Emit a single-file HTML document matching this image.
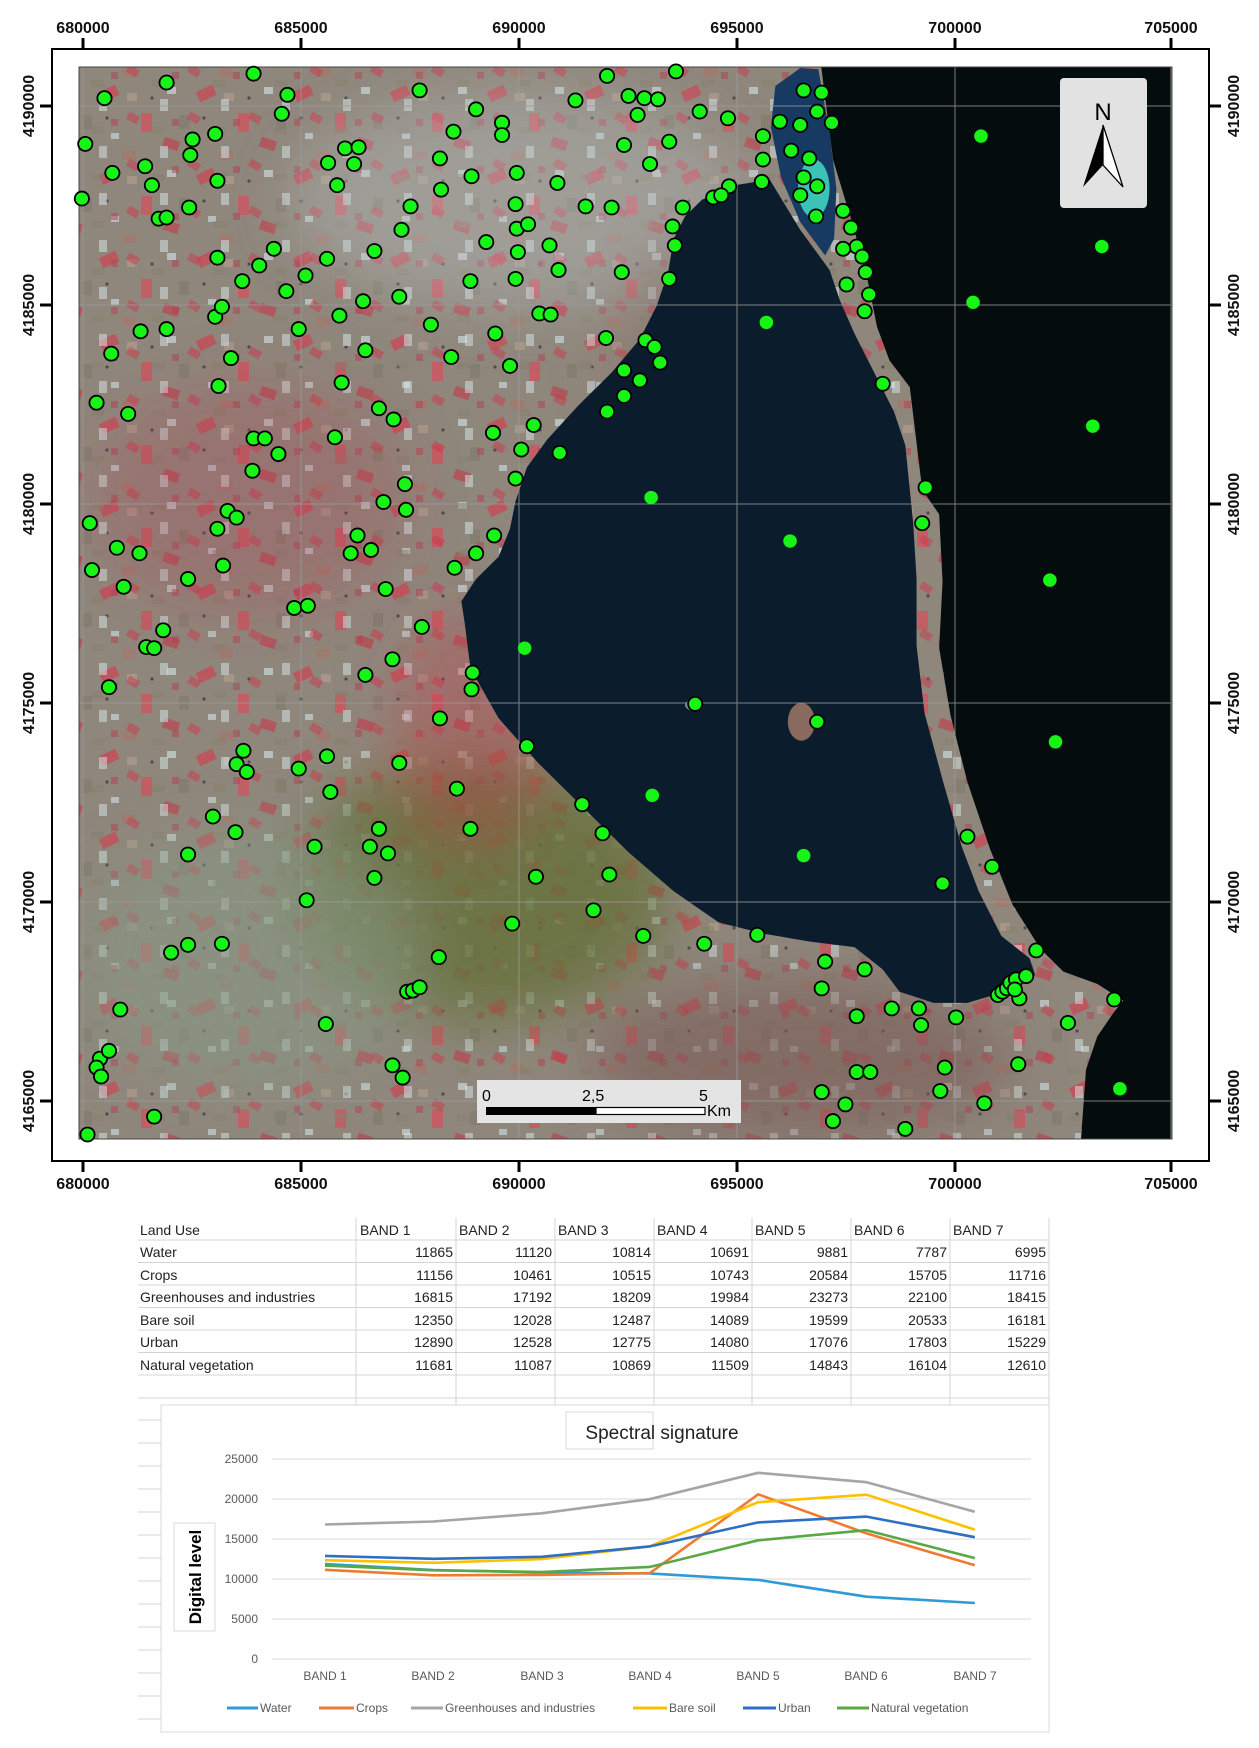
<!DOCTYPE html>
<html><head><meta charset="utf-8"><style>
html,body{margin:0;padding:0;background:#fff;}
body{width:1259px;height:1748px;position:relative;overflow:hidden;font-family:"Liberation Sans",sans-serif;}
svg{position:absolute;left:0;top:0;}
</style></head><body>
<svg width="1259" height="1748" viewBox="0 0 1259 1748">
<defs>
<clipPath id="img"><rect x="79" y="67" width="1093" height="1072"/></clipPath>
<pattern id="f1" patternUnits="userSpaceOnUse" width="97" height="83">
<rect x="3" y="5" width="18" height="11" fill="#d9384c" transform="rotate(-25 12 10)"/>
<rect x="44" y="30" width="11" height="19" fill="#e24456"/>
<rect x="70" y="4" width="9" height="7" fill="#d4e6e8"/>
<rect x="14" y="50" width="8" height="6" fill="#cfe3e6"/>
<rect x="66" y="56" width="16" height="10" fill="#c43848" transform="rotate(18 74 61)"/>
<rect x="30" y="10" width="10" height="8" fill="#b3a08e"/>
<rect x="82" y="32" width="10" height="14" fill="#7e7a6a"/>
<rect x="25" y="68" width="14" height="9" fill="#a87468"/>
<circle cx="55" cy="15" r="1.6" fill="#223"/><circle cx="10" cy="35" r="1.6" fill="#223"/>
</pattern>
<pattern id="f2" patternUnits="userSpaceOnUse" width="61" height="47">
<rect x="5" y="20" width="12" height="8" fill="#cc3a4c" transform="rotate(30 11 24)"/>
<rect x="38" y="5" width="8" height="12" fill="#d8e8ea"/>
<rect x="30" y="33" width="13" height="7" fill="#867f6c"/>
<rect x="50" y="25" width="7" height="7" fill="#b04050"/>
</pattern>
<filter id="bl" x="-30%" y="-30%" width="160%" height="160%"><feGaussianBlur stdDeviation="28"/></filter>
</defs>
<g clip-path="url(#img)">
<rect x="79" y="67" width="1093" height="1072" fill="#8f877c"/>
<rect x="79" y="67" width="1093" height="1072" fill="url(#f1)" opacity="0.6"/>
<rect x="79" y="67" width="1093" height="1072" fill="url(#f2)" opacity="0.5"/>
<g filter="url(#bl)">
<ellipse cx="520" cy="200" rx="230" ry="110" fill="#bcc6c8" opacity="0.35"/>
<ellipse cx="480" cy="890" rx="190" ry="130" fill="#64703a" opacity="0.8"/>
<ellipse cx="250" cy="960" rx="170" ry="130" fill="#879884" opacity="0.6"/>
<ellipse cx="800" cy="1060" rx="210" ry="80" fill="#7c5a56" opacity="0.6"/>
<ellipse cx="470" cy="730" rx="80" ry="120" fill="#c23a4a" opacity="0.35"/>
<ellipse cx="250" cy="500" rx="160" ry="120" fill="#b04050" opacity="0.25"/>
<ellipse cx="700" cy="350" rx="90" ry="120" fill="#8a6e66" opacity="0.4"/>
</g>
<g transform="matrix(1.1295 0 0 1.1155 -3.97 -1.09)">
<polygon fill="#040c0e" points="728,40 1060,40 1060,1030 960,1030 965,960 975,930 990,908 998,898 975,883 945,872 925,852 900,812 880,762 860,702 845,642 835,582 838,522 835,462 820,440 809,348 791,324 780,294 771,249 759,204 741,144"/>
<polygon fill="#0b1d2d" points="415,560 412,540 425,520 445,500 455,475 460,450 470,420 488,395 515,365 545,335 570,305 585,275 595,245 600,215 610,195 625,180 654,167 685,162 712,207 738,243 747,270 760,300 775,330 795,370 805,400 808,430 812,470 815,520 815,580 822,640 838,700 855,760 870,800 890,840 915,860 920,875 900,888 860,900 830,900 800,890 785,870 760,850 720,845 680,838 640,828 600,800 560,765 520,725 480,685 445,645 420,600"/>
<polygon fill="#173a63" points="690,78 712,62 728,63 738,120 744,170 742,215 734,230 712,200 695,160 686,115"/>
<ellipse cx="724" cy="170" rx="14" ry="26" fill="#3fd3bf" opacity="0.9"/>
<ellipse cx="713" cy="648" rx="12" ry="17" fill="#8a6a5e"/>
<ellipse cx="618" cy="633" rx="8" ry="5" fill="#8a8a86"/>
</g>
</g>
<g stroke="#9a9a9a" stroke-width="1" opacity="0.8">
<line x1="83" y1="67" x2="83" y2="1139"/><line x1="301" y1="67" x2="301" y2="1139"/><line x1="519" y1="67" x2="519" y2="1139"/><line x1="737" y1="67" x2="737" y2="1139"/><line x1="955" y1="67" x2="955" y2="1139"/><line x1="1171" y1="67" x2="1171" y2="1139"/>
<line x1="79" y1="106" x2="1172" y2="106"/><line x1="79" y1="305" x2="1172" y2="305"/><line x1="79" y1="504" x2="1172" y2="504"/><line x1="79" y1="703" x2="1172" y2="703"/><line x1="79" y1="902" x2="1172" y2="902"/><line x1="79" y1="1101" x2="1172" y2="1101"/>
</g>
<rect x="79" y="67" width="1093" height="1072" fill="none" stroke="#444" stroke-width="1"/>
<rect x="52" y="49" width="1157" height="1112" fill="none" stroke="#000" stroke-width="2"/>
<g stroke="#000" stroke-width="3">
<line x1="83" y1="38" x2="83" y2="49"/><line x1="301" y1="38" x2="301" y2="49"/><line x1="519" y1="38" x2="519" y2="49"/><line x1="737" y1="38" x2="737" y2="49"/><line x1="955" y1="38" x2="955" y2="49"/><line x1="1171" y1="38" x2="1171" y2="49"/>
<line x1="83" y1="1161" x2="83" y2="1172"/><line x1="301" y1="1161" x2="301" y2="1172"/><line x1="519" y1="1161" x2="519" y2="1172"/><line x1="737" y1="1161" x2="737" y2="1172"/><line x1="955" y1="1161" x2="955" y2="1172"/><line x1="1171" y1="1161" x2="1171" y2="1172"/>
<line x1="40" y1="106" x2="52" y2="106"/><line x1="40" y1="305" x2="52" y2="305"/><line x1="40" y1="504" x2="52" y2="504"/><line x1="40" y1="703" x2="52" y2="703"/><line x1="40" y1="902" x2="52" y2="902"/><line x1="40" y1="1101" x2="52" y2="1101"/>
<line x1="1209" y1="106" x2="1221" y2="106"/><line x1="1209" y1="305" x2="1221" y2="305"/><line x1="1209" y1="504" x2="1221" y2="504"/><line x1="1209" y1="703" x2="1221" y2="703"/><line x1="1209" y1="902" x2="1221" y2="902"/><line x1="1209" y1="1101" x2="1221" y2="1101"/>
</g>
<g font-family="Liberation Sans" font-weight="bold" font-size="16" text-anchor="middle" fill="#111">
<text x="83" y="33">680000</text><text x="301" y="33">685000</text><text x="519" y="33">690000</text><text x="737" y="33">695000</text><text x="955" y="33">700000</text><text x="1171" y="33">705000</text>
<text x="83" y="1189">680000</text><text x="301" y="1189">685000</text><text x="519" y="1189">690000</text><text x="737" y="1189">695000</text><text x="955" y="1189">700000</text><text x="1171" y="1189">705000</text>
<g transform="translate(34 0)"><text transform="translate(0 106) rotate(-90)">4190000</text><text transform="translate(0 305) rotate(-90)">4185000</text><text transform="translate(0 504) rotate(-90)">4180000</text><text transform="translate(0 703) rotate(-90)">4175000</text><text transform="translate(0 902) rotate(-90)">4170000</text><text transform="translate(0 1101) rotate(-90)">4165000</text></g>
<g transform="translate(1239 0)"><text transform="translate(0 106) rotate(-90)">4190000</text><text transform="translate(0 305) rotate(-90)">4185000</text><text transform="translate(0 504) rotate(-90)">4180000</text><text transform="translate(0 703) rotate(-90)">4175000</text><text transform="translate(0 902) rotate(-90)">4170000</text><text transform="translate(0 1101) rotate(-90)">4165000</text></g>
</g>
<g transform="matrix(1.1295 0 0 1.1155 -3.97 -1.09)" fill="#17f517" stroke="#000" stroke-width="1.6">
<circle cx="151" cy="75" r="6.3"/><circle cx="228" cy="67" r="6.3"/><circle cx="96" cy="89" r="6.3"/><circle cx="258" cy="86" r="6.3"/><circle cx="375" cy="82" r="6.3"/><circle cx="541" cy="69" r="6.3"/><circle cx="602" cy="65" r="6.3"/><circle cx="253" cy="103" r="6.3"/><circle cx="425" cy="99" r="6.3"/><circle cx="513" cy="91" r="6.3"/><circle cx="560" cy="87" r="6.3"/><circle cx="574" cy="89" r="6.3"/><circle cx="586" cy="90" r="6.3"/><circle cx="568" cy="104" r="6.3"/><circle cx="623" cy="101" r="6.3"/><circle cx="648" cy="107" r="6.3"/><circle cx="715" cy="82" r="6.3"/><circle cx="731" cy="84" r="6.3"/><circle cx="727" cy="101" r="6.3"/><circle cx="712" cy="113" r="6.3"/><circle cx="694" cy="110" r="6.3"/><circle cx="740" cy="111" r="6.3"/><circle cx="79" cy="130" r="6.3"/><circle cx="194" cy="121" r="6.3"/><circle cx="174" cy="126" r="6.3"/><circle cx="172" cy="140" r="6.3"/><circle cx="405" cy="119" r="6.3"/><circle cx="448" cy="111" r="6.3"/><circle cx="448" cy="122" r="6.3"/><circle cx="309" cy="134" r="6.3"/><circle cx="321" cy="133" r="6.3"/><circle cx="317" cy="148" r="6.3"/><circle cx="294" cy="147" r="6.3"/><circle cx="132" cy="150" r="6.3"/><circle cx="103" cy="156" r="6.3"/><circle cx="138" cy="167" r="6.3"/><circle cx="196" cy="163" r="6.3"/><circle cx="302" cy="167" r="6.3"/><circle cx="393" cy="143" r="6.3"/><circle cx="421" cy="159" r="6.3"/><circle cx="461" cy="156" r="6.3"/><circle cx="556" cy="131" r="6.3"/><circle cx="579" cy="148" r="6.3"/><circle cx="596" cy="128" r="6.3"/><circle cx="679" cy="123" r="6.3"/><circle cx="679" cy="144" r="6.3"/><circle cx="704" cy="136" r="6.3"/><circle cx="720" cy="143" r="6.3"/><circle cx="715" cy="160" r="6.3"/><circle cx="712" cy="176" r="6.3"/><circle cx="727" cy="168" r="6.3"/><circle cx="678" cy="164" r="6.3"/><circle cx="635" cy="178" r="6.3"/><circle cx="649" cy="168" r="6.3"/><circle cx="76" cy="179" r="6.3"/><circle cx="144" cy="197" r="6.3"/><circle cx="151" cy="196" r="6.3"/><circle cx="171" cy="187" r="6.3"/><circle cx="367" cy="186" r="6.3"/><circle cx="394" cy="171" r="6.3"/><circle cx="460" cy="184" r="6.3"/><circle cx="497" cy="165" r="6.3"/><circle cx="522" cy="186" r="6.3"/><circle cx="545" cy="187" r="6.3"/><circle cx="608" cy="187" r="6.3"/><circle cx="642" cy="176" r="6.3"/><circle cx="750" cy="190" r="6.3"/><circle cx="726" cy="195" r="6.3"/><circle cx="757" cy="205" r="6.3"/><circle cx="762" cy="222" r="6.3"/><circle cx="750" cy="224" r="6.3"/><circle cx="767" cy="231" r="6.3"/><circle cx="770" cy="245" r="6.3"/><circle cx="753" cy="256" r="6.3"/><circle cx="773" cy="265" r="6.3"/><circle cx="769" cy="280" r="6.3"/><circle cx="785" cy="345" r="6.3"/><circle cx="196" cy="232" r="6.3"/><circle cx="233" cy="239" r="6.3"/><circle cx="246" cy="224" r="6.3"/><circle cx="293" cy="233" r="6.3"/><circle cx="335" cy="226" r="6.3"/><circle cx="359" cy="207" r="6.3"/><circle cx="434" cy="218" r="6.3"/><circle cx="461" cy="206" r="6.3"/><circle cx="471" cy="202" r="6.3"/><circle cx="490" cy="221" r="6.3"/><circle cx="498" cy="243" r="6.3"/><circle cx="554" cy="245" r="6.3"/><circle cx="599" cy="204" r="6.3"/><circle cx="601" cy="221" r="6.3"/><circle cx="462" cy="227" r="6.3"/><circle cx="218" cy="253" r="6.3"/><circle cx="274" cy="248" r="6.3"/><circle cx="257" cy="262" r="6.3"/><circle cx="420" cy="253" r="6.3"/><circle cx="357" cy="267" r="6.3"/><circle cx="304" cy="284" r="6.3"/><circle cx="325" cy="271" r="6.3"/><circle cx="460" cy="251" r="6.3"/><circle cx="481" cy="282" r="6.3"/><circle cx="491" cy="283" r="6.3"/><circle cx="128" cy="298" r="6.3"/><circle cx="151" cy="296" r="6.3"/><circle cx="194" cy="285" r="6.3"/><circle cx="200" cy="276" r="6.3"/><circle cx="268" cy="296" r="6.3"/><circle cx="385" cy="292" r="6.3"/><circle cx="442" cy="300" r="6.3"/><circle cx="540" cy="304" r="6.3"/><circle cx="575" cy="306" r="6.3"/><circle cx="583" cy="312" r="6.3"/><circle cx="588" cy="326" r="6.3"/><circle cx="556" cy="333" r="6.3"/><circle cx="596" cy="251" r="6.3"/><circle cx="102" cy="318" r="6.3"/><circle cx="208" cy="322" r="6.3"/><circle cx="327" cy="315" r="6.3"/><circle cx="403" cy="321" r="6.3"/><circle cx="455" cy="329" r="6.3"/><circle cx="556" cy="356" r="6.3"/><circle cx="570" cy="342" r="6.3"/><circle cx="197" cy="347" r="6.3"/><circle cx="306" cy="344" r="6.3"/><circle cx="89" cy="362" r="6.3"/><circle cx="117" cy="372" r="6.3"/><circle cx="339" cy="367" r="6.3"/><circle cx="352" cy="377" r="6.3"/><circle cx="476" cy="382" r="6.3"/><circle cx="499" cy="407" r="6.3"/><circle cx="541" cy="370" r="6.3"/><circle cx="300" cy="393" r="6.3"/><circle cx="228" cy="394" r="6.3"/><circle cx="238" cy="394" r="6.3"/><circle cx="250" cy="408" r="6.3"/><circle cx="440" cy="389" r="6.3"/><circle cx="465" cy="404" r="6.3"/><circle cx="227" cy="423" r="6.3"/><circle cx="460" cy="430" r="6.3"/><circle cx="362" cy="435" r="6.3"/><circle cx="823" cy="438" r="6.3"/><circle cx="820" cy="470" r="6.3"/><circle cx="83" cy="470" r="6.3"/><circle cx="205" cy="459" r="6.3"/><circle cx="213" cy="465" r="6.3"/><circle cx="196" cy="475" r="6.3"/><circle cx="343" cy="451" r="6.3"/><circle cx="363" cy="458" r="6.3"/><circle cx="320" cy="481" r="6.3"/><circle cx="441" cy="481" r="6.3"/><circle cx="332" cy="494" r="6.3"/><circle cx="314" cy="497" r="6.3"/><circle cx="425" cy="497" r="6.3"/><circle cx="107" cy="492" r="6.3"/><circle cx="127" cy="497" r="6.3"/><circle cx="85" cy="512" r="6.3"/><circle cx="113" cy="527" r="6.3"/><circle cx="201" cy="508" r="6.3"/><circle cx="170" cy="520" r="6.3"/><circle cx="345" cy="529" r="6.3"/><circle cx="406" cy="510" r="6.3"/><circle cx="264" cy="546" r="6.3"/><circle cx="276" cy="544" r="6.3"/><circle cx="148" cy="566" r="6.3"/><circle cx="133" cy="581" r="6.3"/><circle cx="140" cy="582" r="6.3"/><circle cx="100" cy="617" r="6.3"/><circle cx="377" cy="563" r="6.3"/><circle cx="351" cy="592" r="6.3"/><circle cx="327" cy="606" r="6.3"/><circle cx="422" cy="604" r="6.3"/><circle cx="421" cy="619" r="6.3"/><circle cx="393" cy="645" r="6.3"/><circle cx="619" cy="632" r="6.3"/><circle cx="727" cy="648" r="6.3"/><circle cx="219" cy="674" r="6.3"/><circle cx="213" cy="686" r="6.3"/><circle cx="222" cy="693" r="6.3"/><circle cx="268" cy="690" r="6.3"/><circle cx="293" cy="679" r="6.3"/><circle cx="357" cy="685" r="6.3"/><circle cx="470" cy="670" r="6.3"/><circle cx="296" cy="711" r="6.3"/><circle cx="408" cy="708" r="6.3"/><circle cx="192" cy="733" r="6.3"/><circle cx="212" cy="747" r="6.3"/><circle cx="339" cy="744" r="6.3"/><circle cx="282" cy="760" r="6.3"/><circle cx="331" cy="760" r="6.3"/><circle cx="347" cy="766" r="6.3"/><circle cx="420" cy="744" r="6.3"/><circle cx="519" cy="722" r="6.3"/><circle cx="537" cy="748" r="6.3"/><circle cx="170" cy="767" r="6.3"/><circle cx="275" cy="808" r="6.3"/><circle cx="335" cy="788" r="6.3"/><circle cx="543" cy="785" r="6.3"/><circle cx="478" cy="787" r="6.3"/><circle cx="860" cy="751" r="6.3"/><circle cx="882" cy="778" r="6.3"/><circle cx="838" cy="793" r="6.3"/><circle cx="457" cy="829" r="6.3"/><circle cx="529" cy="817" r="6.3"/><circle cx="573" cy="840" r="6.3"/><circle cx="627" cy="847" r="6.3"/><circle cx="674" cy="839" r="6.3"/><circle cx="155" cy="855" r="6.3"/><circle cx="170" cy="848" r="6.3"/><circle cx="200" cy="847" r="6.3"/><circle cx="392" cy="859" r="6.3"/><circle cx="364" cy="890" r="6.3"/><circle cx="369" cy="889" r="6.3"/><circle cx="375" cy="886" r="6.3"/><circle cx="734" cy="863" r="6.3"/><circle cx="769" cy="870" r="6.3"/><circle cx="921" cy="853" r="6.3"/><circle cx="110" cy="906" r="6.3"/><circle cx="292" cy="919" r="6.3"/><circle cx="351" cy="956" r="6.3"/><circle cx="360" cy="967" r="6.3"/><circle cx="92" cy="950" r="6.3"/><circle cx="89" cy="958" r="6.3"/><circle cx="100" cy="943" r="6.3"/><circle cx="93" cy="966" r="6.3"/><circle cx="140" cy="1002" r="6.3"/><circle cx="81" cy="1018" r="6.3"/><circle cx="731" cy="980" r="6.3"/><circle cx="752" cy="991" r="6.3"/><circle cx="741" cy="1006" r="6.3"/><circle cx="805" cy="1013" r="6.3"/><circle cx="836" cy="979" r="6.3"/><circle cx="840" cy="958" r="6.3"/><circle cx="762" cy="962" r="6.3"/><circle cx="774" cy="962" r="6.3"/><circle cx="731" cy="887" r="6.3"/><circle cx="762" cy="912" r="6.3"/><circle cx="793" cy="905" r="6.3"/><circle cx="817" cy="905" r="6.3"/><circle cx="819" cy="920" r="6.3"/><circle cx="850" cy="913" r="6.3"/><circle cx="887" cy="893" r="6.3"/><circle cx="891" cy="890" r="6.3"/><circle cx="895" cy="887" r="6.3"/><circle cx="898" cy="882" r="6.3"/><circle cx="903" cy="879" r="6.3"/><circle cx="912" cy="876" r="6.3"/><circle cx="906" cy="896" r="6.3"/><circle cx="902" cy="888" r="6.3"/><circle cx="949" cy="918" r="6.3"/><circle cx="905" cy="955" r="6.3"/><circle cx="875" cy="990" r="6.3"/><circle cx="990" cy="897" r="6.3"/>
<g stroke="none"><circle cx="872" cy="123" r="6"/><circle cx="979" cy="222" r="6"/><circle cx="865" cy="272" r="6"/><circle cx="971" cy="383" r="6"/><circle cx="682" cy="290" r="6"/><circle cx="580" cy="447" r="6"/><circle cx="703" cy="486" r="6"/><circle cx="933" cy="521" r="6"/><circle cx="938" cy="666" r="6"/><circle cx="995" cy="977" r="6"/><circle cx="468" cy="582" r="6"/><circle cx="581" cy="714" r="6"/><circle cx="715" cy="768" r="6"/></g>
</g>
<rect x="1060" y="78" width="87" height="130" rx="4" fill="#e2e2e2"/>
<text x="1103" y="120" font-family="Liberation Sans" font-size="24" text-anchor="middle" fill="#000">N</text>
<polygon points="1103,125 1083,187 1103,165" fill="#000"/>
<polygon points="1103,125 1123,187 1103,165" fill="#fff" stroke="#000" stroke-width="1.3"/>
<rect x="477" y="1080" width="264" height="43" fill="#e4e4e4"/>
<g font-family="Liberation Sans" font-size="16" fill="#000"><text x="482" y="1101">0</text><text x="582" y="1101">2,5</text><text x="699" y="1101">5</text><text x="707" y="1116">Km</text></g>
<rect x="486" y="1107" width="110" height="8" fill="#000"/>
<rect x="596" y="1107.5" width="109" height="7" fill="#fff" stroke="#000" stroke-width="1.2"/>

<g stroke="#d4d4d4" stroke-width="1">
<line x1="138" y1="1240" x2="1049" y2="1240"/><line x1="138" y1="1262.5" x2="1049" y2="1262.5"/><line x1="138" y1="1285" x2="1049" y2="1285"/><line x1="138" y1="1307.5" x2="1049" y2="1307.5"/><line x1="138" y1="1330" x2="1049" y2="1330"/><line x1="138" y1="1352.5" x2="1049" y2="1352.5"/><line x1="138" y1="1375" x2="1049" y2="1375"/><line x1="138" y1="1398" x2="1049" y2="1398"/>
<line x1="356" y1="1218" x2="356" y2="1405"/><line x1="456" y1="1218" x2="456" y2="1405"/><line x1="555" y1="1218" x2="555" y2="1405"/><line x1="654" y1="1218" x2="654" y2="1405"/><line x1="752" y1="1218" x2="752" y2="1405"/><line x1="851" y1="1218" x2="851" y2="1405"/><line x1="950" y1="1218" x2="950" y2="1405"/><line x1="1049" y1="1218" x2="1049" y2="1405"/>
<line x1="138" y1="1420" x2="161" y2="1420"/><line x1="138" y1="1443" x2="161" y2="1443"/><line x1="138" y1="1466" x2="161" y2="1466"/><line x1="138" y1="1489" x2="161" y2="1489"/><line x1="138" y1="1512" x2="161" y2="1512"/><line x1="138" y1="1535" x2="161" y2="1535"/><line x1="138" y1="1558" x2="161" y2="1558"/><line x1="138" y1="1581" x2="161" y2="1581"/><line x1="138" y1="1604" x2="161" y2="1604"/><line x1="138" y1="1627" x2="161" y2="1627"/><line x1="138" y1="1650" x2="161" y2="1650"/><line x1="138" y1="1673" x2="161" y2="1673"/><line x1="138" y1="1696" x2="161" y2="1696"/><line x1="138" y1="1719" x2="161" y2="1719"/>
</g>
<g font-family="Liberation Sans Narrow, Liberation Sans, sans-serif" font-size="14" fill="#222">
<text x="140" y="1235">Land Use</text>
<text x="360" y="1235">BAND 1</text><text x="459" y="1235">BAND 2</text><text x="558" y="1235">BAND 3</text><text x="657" y="1235">BAND 4</text><text x="755" y="1235">BAND 5</text><text x="854" y="1235">BAND 6</text><text x="953" y="1235">BAND 7</text>
<text x="140" y="1257">Water</text><text x="140" y="1280">Crops</text><text x="140" y="1302">Greenhouses and industries</text><text x="140" y="1325">Bare soil</text><text x="140" y="1347">Urban</text><text x="140" y="1370">Natural vegetation</text>
<g text-anchor="end">
<text x="453" y="1257">11865</text><text x="552" y="1257">11120</text><text x="651" y="1257">10814</text><text x="749" y="1257">10691</text><text x="848" y="1257">9881</text><text x="947" y="1257">7787</text><text x="1046" y="1257">6995</text>
<text x="453" y="1280">11156</text><text x="552" y="1280">10461</text><text x="651" y="1280">10515</text><text x="749" y="1280">10743</text><text x="848" y="1280">20584</text><text x="947" y="1280">15705</text><text x="1046" y="1280">11716</text>
<text x="453" y="1302">16815</text><text x="552" y="1302">17192</text><text x="651" y="1302">18209</text><text x="749" y="1302">19984</text><text x="848" y="1302">23273</text><text x="947" y="1302">22100</text><text x="1046" y="1302">18415</text>
<text x="453" y="1325">12350</text><text x="552" y="1325">12028</text><text x="651" y="1325">12487</text><text x="749" y="1325">14089</text><text x="848" y="1325">19599</text><text x="947" y="1325">20533</text><text x="1046" y="1325">16181</text>
<text x="453" y="1347">12890</text><text x="552" y="1347">12528</text><text x="651" y="1347">12775</text><text x="749" y="1347">14080</text><text x="848" y="1347">17076</text><text x="947" y="1347">17803</text><text x="1046" y="1347">15229</text>
<text x="453" y="1370">11681</text><text x="552" y="1370">11087</text><text x="651" y="1370">10869</text><text x="749" y="1370">11509</text><text x="848" y="1370">14843</text><text x="947" y="1370">16104</text><text x="1046" y="1370">12610</text>
</g></g>

<rect x="161" y="1405" width="888" height="327" fill="#fff" stroke="#d9d9d9" stroke-width="1"/>
<rect x="566" y="1412" width="87" height="37" fill="#fff" stroke="#d9d9d9"/>
<text x="662" y="1439" font-family="Liberation Sans Narrow, Liberation Sans, sans-serif" font-size="19" text-anchor="middle" fill="#222">Spectral signature</text>
<g stroke="#d9d9d9" stroke-width="1">
<line x1="272" y1="1459" x2="1031" y2="1459"/><line x1="272" y1="1499" x2="1031" y2="1499"/><line x1="272" y1="1539" x2="1031" y2="1539"/><line x1="272" y1="1579" x2="1031" y2="1579"/><line x1="272" y1="1619" x2="1031" y2="1619"/><line x1="272" y1="1659" x2="1031" y2="1659"/>
</g>
<g font-family="Liberation Sans Narrow, Liberation Sans, sans-serif" font-size="12" fill="#595959" text-anchor="end">
<text x="258" y="1463">25000</text><text x="258" y="1503">20000</text><text x="258" y="1543">15000</text><text x="258" y="1583">10000</text><text x="258" y="1623">5000</text><text x="258" y="1663">0</text>
</g>
<g font-family="Liberation Sans Narrow, Liberation Sans, sans-serif" font-size="12" fill="#595959" text-anchor="middle">
<text x="325" y="1680">BAND 1</text><text x="433" y="1680">BAND 2</text><text x="542" y="1680">BAND 3</text><text x="650" y="1680">BAND 4</text><text x="758" y="1680">BAND 5</text><text x="866" y="1680">BAND 6</text><text x="975" y="1680">BAND 7</text>
</g>
<rect x="174" y="1523" width="41" height="108" fill="#fff" stroke="#d9d9d9"/>
<text transform="translate(201 1577) rotate(-90)" font-family="Liberation Sans" font-weight="bold" font-size="17" text-anchor="middle" fill="#000">Digital level</text>
<g fill="none" stroke-width="2.6" stroke-linejoin="round">
<polyline stroke="#a5a5a5" points="325,1524.5 433.3,1521.5 541.6,1513.3 649.9,1499.1 758.2,1472.8 866.5,1482.2 974.8,1511.7"/>
<polyline stroke="#2e9bd6" points="325,1564.1 433.3,1570 541.6,1572.5 649.9,1573.5 758.2,1579.9 866.5,1596.7 974.8,1603"/>
<polyline stroke="#ee7b30" points="325,1569.8 433.3,1575.3 541.6,1574.9 649.9,1573.1 758.2,1494.3 866.5,1533.4 974.8,1565.3"/>
<polyline stroke="#ffc000" points="325,1560.2 433.3,1562.8 541.6,1559.1 649.9,1546.3 758.2,1502.2 866.5,1494.7 974.8,1529.6"/>
<polyline stroke="#5aa845" points="325,1565.6 433.3,1570.3 541.6,1572 649.9,1566.9 758.2,1540.3 866.5,1530.2 974.8,1558.1"/>
<polyline stroke="#2e6fc4" points="325,1555.9 433.3,1558.8 541.6,1556.8 649.9,1546.4 758.2,1522.4 866.5,1516.6 974.8,1537.2"/>
</g>
<g stroke-width="3">
<line x1="227" y1="1708" x2="258" y2="1708" stroke="#2e9bd6"/>
<line x1="319" y1="1708" x2="354" y2="1708" stroke="#ee7b30"/>
<line x1="411" y1="1708" x2="443" y2="1708" stroke="#a5a5a5"/>
<line x1="633" y1="1708" x2="667" y2="1708" stroke="#ffc000"/>
<line x1="743" y1="1708" x2="776" y2="1708" stroke="#2e6fc4"/>
<line x1="837" y1="1708" x2="869" y2="1708" stroke="#5aa845"/>
</g>
<g font-family="Liberation Sans Narrow, Liberation Sans, sans-serif" font-size="12" fill="#595959">
<text x="260" y="1712">Water</text><text x="356" y="1712">Crops</text><text x="445" y="1712">Greenhouses and industries</text><text x="669" y="1712">Bare soil</text><text x="778" y="1712">Urban</text><text x="871" y="1712">Natural vegetation</text>
</g>
</svg>
</body></html>
